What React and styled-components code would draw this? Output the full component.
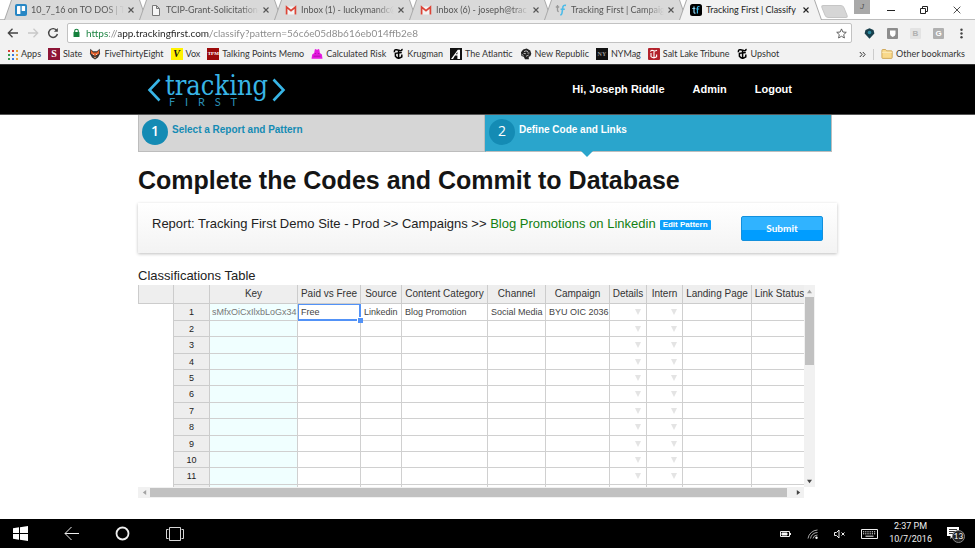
import React from "react";
import styled, { createGlobalStyle, css } from "styled-components";

const UI = `Lato, "Open Sans", sans-serif`;
const SANS = `"Liberation Sans", Arial, sans-serif`;

const Global = createGlobalStyle`
  * { box-sizing: border-box; }
  body { margin: 0; background: #fff; font-family: ${SANS}; color: #222; }
  button { font: inherit; color: inherit; background: none; border: 0; padding: 0; cursor: pointer; }
  a { color: inherit; text-decoration: none; }
  svg { display: block; flex: none; }
`;

const Screen = styled.div`
  min-height: 100vh;
  display: flex;
  flex-direction: column;
  overflow: hidden;
`;

/* ---------- Browser frame ---------- */

const TabStrip = styled.div`
  display: flex;
  height: 20px;
  padding-left: 4px;
  background: #fff;
  border-bottom: 1px solid #bdbdbd;
  font: 9px/20px ${UI};
  color: #555;
`;

const TabBox = styled.div`
  position: relative;
  display: flex;
  align-items: center;
  flex: 0 1 143px;
  min-width: 0;
  height: 20px;
  margin-right: -8px;
  padding: 0 13px 0 11px;
  isolation: isolate;
  color: ${(p) => (p.$active ? "#222" : "#555")};
  z-index: ${(p) => (p.$active ? 1 : 0)};
  &::before,
  &::after {
    content: "";
    position: absolute;
    inset: 0;
    z-index: -2;
    background: #a9a9a9;
    clip-path: polygon(0 100%, 7px 0, calc(100% - 7px) 0, 100% 100%);
  }
  &::after {
    inset: 0 1px;
    z-index: -1;
    background: ${(p) => (p.$active ? "#f2f2f2" : "#d9d9d9")};
  }
`;

const TabTitle = styled.button`
  flex: 1;
  min-width: 0;
  margin: 0 4px;
  height: 20px;
  text-align: left;
  white-space: nowrap;
  overflow: hidden;
  mask-image: ${(p) => (p.$fade ? "linear-gradient(90deg, #000 80%, transparent)" : "none")};
`;

const IconButton = styled.button`
  display: flex;
  align-items: center;
  justify-content: center;
  flex: none;
`;

const NewTab = styled.button`
  width: 23px;
  height: 13px;
  margin: 5px 0 0 9px;
  background: #d6d6d6;
  border: 1px solid #c6c6c6;
  border-radius: 3px;
  transform: skewX(22deg);
`;

const WindowControls = styled.div`
  display: flex;
  align-items: center;
  padding: 0 14px 0 17px;
  gap: 25px;
  color: #222;
`;

const Profile = styled.button`
  width: 16px;
  height: 14px;
  margin-left: auto;
  background: #a9a9a9;
  color: #555;
  font: italic 8px/14px ${SANS};
`;

const Toolbar = styled.div`
  display: flex;
  align-items: center;
  height: 26px;
  padding: 0 8px 0 7px;
  gap: 8px;
  background: #f2f2f2;
`;

const AddressBar = styled.label`
  display: flex;
  align-items: center;
  flex: 1;
  height: 20px;
  padding: 0 4px;
  gap: 5px;
  background: #fff;
  border: 1px solid #c2c2c2;
  border-radius: 2px;
`;

const AddressInput = styled.input`
  flex: 1;
  min-width: 0;
  height: 18px;
  padding: 0;
  border: 0;
  outline: 0;
  font: 10px/18px ${UI};
  color: transparent;
  background: linear-gradient(90deg, #15803c 22px, #888 22px, #888 32px, #222 32px, #222 124px, #888 124px);
  background-clip: text;
`;

const Extensions = styled.div`
  display: flex;
  align-items: center;
  gap: 12px;
  padding-left: 4px;
`;

const ExtBadge = styled.button`
  width: 11px;
  height: 11px;
  border-radius: 1px;
  background: ${(p) => p.$bg};
  color: ${(p) => p.$fg};
  font: bold 8px/11px ${SANS};
  text-align: center;
`;

const Bookmarks = styled.nav`
  display: flex;
  align-items: center;
  height: 18px;
  padding: 0 10px 2px 7px;
  gap: 7px;
  background: #f2f2f2;
  font: 9px/14px ${UI};
  color: #333;
  white-space: nowrap;
`;

const Bookmark = styled.a`
  display: flex;
  align-items: center;
  gap: 3px;
  height: 14px;
`;

const BookmarkEnd = styled.div`
  display: flex;
  align-items: center;
  gap: 7px;
  margin-left: auto;
`;

const Divider = styled.span`
  width: 1px;
  height: 11px;
  background: #ccc;
`;

const Tile = styled.span`
  width: 12px;
  height: 12px;
  background: ${(p) => p.$bg};
  color: ${(p) => p.$fg || "#fff"};
  font: bold ${(p) => p.$size || 10}px/12px "Liberation Serif", serif;
  text-align: center;
`;

/* ---------- Site ---------- */

const SiteHeader = styled.header`
  background: #000;
  border-top: 1px solid #333;
  border-bottom: 1px solid #555;
`;

const Container = styled.div`
  width: 100%;
  max-width: 699px;
  margin: 0 auto;
`;

const HeaderRow = styled(Container)`
  display: flex;
  align-items: center;
  justify-content: space-between;
  height: 49px;
  padding: 0 45px 0 9px;
`;

const Logo = styled.a`
  display: flex;
  align-items: center;
  gap: 4px;
  color: #38b5e6;
`;

const LogoWords = styled.span`
  display: flex;
  flex-direction: column;
`;

const LogoName = styled.span`
  font: 27px/28px "DejaVu Serif Condensed", "DejaVu Serif", serif;
`;

const LogoSub = styled.span`
  display: flex;
  justify-content: space-between;
  width: 68px;
  margin: -3px 0 0 4px;
  font: 11px/10px Lato, sans-serif;
  color: #2b8fb5;
`;

const SiteNav = styled.nav`
  display: flex;
  gap: 28px;
  padding-bottom: 2px;
  font: bold 11px/14px ${SANS};
  color: #fff;
`;

const Steps = styled.ol`
  display: flex;
  list-style: none;
  margin: 0 5px 0 0;
  padding: 0;
`;

const Step = styled.li`
  position: relative;
  flex: 1;
  display: flex;
  gap: 4px;
  height: 37px;
  padding: 4px 3px;
  border: 1px solid #bdbdbd;
  border-top: 0;
  background: #d6d6d6;
  color: #148bb4;
  font: bold 10px/22px ${SANS};
  ${(p) =>
    p.$current &&
    css`
      background: #2aa5cc;
      color: #fff;
      border-left-color: #2aa5cc;
      &::after {
        content: "";
        position: absolute;
        left: 95px;
        top: 36px;
        border: 6px solid transparent;
        border-top-color: #2aa5cc;
        border-bottom: 0;
      }
    `}
`;

const StepNumber = styled.span`
  width: 26px;
  height: 26px;
  border-radius: 50%;
  background: #148bb4;
  color: #fff;
  font: ${(p) => (p.$current ? 400 : 600)} 14px/24px "Open Sans", sans-serif;
  text-align: center;
`;

const Title = styled.h1`
  margin: 14px 0 9px;
  font: bold 25px/28px ${SANS};
  color: #151515;
`;

const ReportCard = styled.section`
  display: flex;
  justify-content: space-between;
  align-items: flex-start;
  height: 50px;
  padding: 13px 14px 0;
  background: linear-gradient(#fff, #f3f3f3);
  box-shadow: 0 1px 3px rgba(0, 0, 0, 0.25);
`;

const ReportText = styled.p`
  display: flex;
  align-items: center;
  gap: 4px;
  margin: 0;
  font: 13px/16px ${SANS};
  white-space: pre;
`;

const PatternName = styled.span`
  color: #128012;
`;

const EditPattern = styled.button`
  height: 10px;
  margin-top: 2px;
  padding: 0 3px;
  border-radius: 1px;
  background: #0d9ffb;
  color: #fff;
  font: bold 8px/10px ${SANS};
`;

const Submit = styled.button`
  width: 82px;
  height: 25px;
  padding-bottom: 2px;
  border: 1px solid #1290dd;
  border-radius: 2px;
  background: linear-gradient(#30b3ff 55%, #009dff 55%);
  color: #fff;
  font: bold 10px/20px ${UI};
`;

const Caption = styled.h2`
  margin: 13px 0 0;
  font: 13px/19px ${SANS};
  color: #222;
`;

const Grid = styled.div`
  display: grid;
  grid-template-columns: minmax(0, 1fr) 11px;
  grid-template-rows: 202px 11px;
  margin: 0 22px 19px 0;
`;

const Viewport = styled.div`
  overflow: hidden;
`;

const Table = styled.table`
  border-collapse: separate;
  border-spacing: 0;
  table-layout: fixed;
  width: 670px;
  font: 9px/12px ${SANS};
  color: #444;
  white-space: nowrap;
`;

const HeadCell = styled.th`
  height: 19px;
  padding: 0;
  background: #eee;
  border: solid #ccc;
  border-width: 0 1px 1px 0;
  font: 10px/18px ${SANS};
  color: #333;
  &:first-child {
    border-left-width: 1px;
  }
`;

const Row = styled.tr`
  height: 16px;
  &:nth-child(5n + 1),
  &:nth-child(5n + 3) {
    height: 17px;
  }
`;

const Spacer = styled.td`
  padding: 0;
  border-right: 1px solid #ccc;
`;

const RowHead = styled.th`
  padding: 0;
  background: #eee;
  border: solid #ccc;
  border-width: 0 1px 1px 0;
  font-weight: 400;
  color: #222;
`;

const Cell = styled.td`
  position: relative;
  padding: 0 3px;
  border: solid #d0d0d0;
  border-width: 0 1px 1px 0;
  background: ${(p) => (p.$key ? "#f0ffff" : "#fff")};
  ${(p) => p.$key && "color: #777; padding: 0 2px;"}
  ${(p) =>
    p.$selected &&
    css`
      z-index: 1;
      border-color: #5292f7;
      box-shadow: 0 0 0 1px #5292f7 inset;
      &::after {
        content: "";
        position: absolute;
        right: -3px;
        bottom: -3px;
        width: 5px;
        height: 5px;
        background: #5292f7;
        border: solid #fff;
        border-width: 1px 0 0 1px;
      }
    `}
`;

const Caret = styled.button`
  display: block;
  margin: 0 2px 0 auto;
  color: #e4e4e4;
`;

const VScroll = styled.div`
  display: flex;
  flex-direction: column;
  align-items: center;
  justify-content: space-between;
  background: #f1f1f1;
`;

const VThumb = styled.div`
  width: 9px;
  height: 68px;
  margin-bottom: auto;
  background: #c1c1c1;
`;

const HScroll = styled.div`
  display: flex;
  align-items: center;
  background: #f1f1f1;
`;

const HThumb = styled.div`
  flex: 1;
  height: 9px;
  margin-right: 5px;
  background: #c1c1c1;
`;

const Arrow = styled(IconButton)`
  width: 12px;
  height: 12px;
  color: ${(p) => (p.$dim ? "#a3a3a3" : "#444")};
`;

/* ---------- Taskbar ---------- */

const Taskbar = styled.footer`
  display: flex;
  align-items: center;
  justify-content: space-between;
  height: 29px;
  margin-top: auto;
  padding: 0 11px 0 13px;
  background: #000;
  color: #eee;
`;

const TaskGroup = styled.div`
  display: flex;
  align-items: center;
  gap: ${(p) => p.$gap}px;
`;

const Clock = styled.time`
  margin: 0 0 1px -4px;
  font: 9px/13px Roboto, sans-serif;
  text-align: center;
`;

const Notice = styled(IconButton)`
  position: relative;
`;

const Count = styled.span`
  position: absolute;
  left: 5px;
  top: 3px;
  width: 13px;
  height: 13px;
  border: 1px solid #888;
  border-radius: 50%;
  background: #222;
  color: #fff;
  font: 8px/11px ${UI};
  text-align: center;
`;

/* ---------- Icons ---------- */

const Svg = ({ w = 12, h = w, vb, children, ...rest }) => (
  <svg width={w} height={h} viewBox={vb || `0 0 ${w} ${h}`} fill="none" stroke="currentColor" aria-hidden="true" {...rest}>
    {children}
  </svg>
);

const Cross = ({ size = 6 }) => (
  <Svg w={size} vb="0 0 6 6" strokeWidth={size > 6 ? 0.6 : 1.1}>
    <path d="M.5.5l5 5M5.5.5l-5 5" />
  </Svg>
);
const Trello = () => (
  <Svg stroke="none">
    <rect width="12" height="12" rx="2" fill="#2686c4" />
    <rect x="2" y="2" width="3.4" height="8" rx=".6" fill="#fff" />
    <rect x="6.7" y="2" width="3.4" height="5" rx=".6" fill="#fff" />
  </Svg>
);
const Doc = () => (
  <Svg strokeWidth="1" color="#777">
    <path d="M2.5 1.5h4l3 3v7h-7zM6.5 1.5v3h3" fill="#f5f5f5" />
  </Svg>
);
const Gmail = () => (
  <Svg stroke="none">
    <path d="M1 2.5h10v8H1z" fill="#f3f3f3" />
    <path d="M1.6 10.5V3L6 6.6 10.4 3v7.5" stroke="#dc4437" strokeWidth="1.7" />
  </Svg>
);
const TfLight = () => (
  <Svg strokeWidth="1.3">
    <path d="M2.5 1v5.5q0 1 1.3 1M.8 3h3.4" stroke="#999" />
    <path d="M11 1.4q-3-.6-3.2 2L7 9q-.3 2-1.8 1.7M5.6 5.2h4.2" stroke="#4cbbe8" strokeWidth="1.6" />
  </Svg>
);
const TfDark = () => (
  <Svg strokeWidth="1.2">
    <rect width="12" height="12" rx="2.5" fill="#000" stroke="none" />
    <path d="M4 2.5v5.6q0 1.2 1.5 1M2.3 4.5h3" stroke="#8fd8f5" />
    <path d="M9.5 2.6Q7.4 2.2 7.4 4v5.6M6.2 5h3" stroke="#38b5e6" />
  </Svg>
);
const AppsIcon = () => (
  <Svg w={11} stroke="none">
    {["#d93d32", "#d93d32", "#e8a33a", "#3a9b50", "#3b78e0", "#e8a33a", "#3a9b50", "#3b78e0", "#e8a33a"].map((c, i) => (
      <rect key={i} x={1 + (i % 3) * 4} y={1 + Math.floor(i / 3) * 4} width="2" height="2" fill={c} />
    ))}
  </Svg>
);
const Fox = () => (
  <Svg stroke="none">
    <path d="M1.3.8l2.8 2.4h3.8L10.7.8l.4 5L9 9.5 6 11.6 3 9.5.9 5.8z" fill="#333" />
    <path d="M2 2l2.2 2.4h3.6L10 2l.2 3.6L6 8 1.8 5.6z" fill="#e8622c" />
    <path d="M3.3 5.4l1.8.8-.7.8zM8.7 5.4l-1.8.8.7.8z" fill="#fff" />
    <path d="M4.4 8.4L6 9l1.6-.6L6 10.6z" fill="#f0a070" />
  </Svg>
);
const Risk = () => (
  <Svg stroke="none">
    <path d="M.5 10.8l.7-4.3 2-1.5.6-3.6 1.1-.5 1.1 1.2L7.2.9l1.1.5.6 3.6 2 1.5.6 4.3z" fill="#e619e0" />
    <path d="M3.8 5.6h1.3M6.9 5.6h1.3M2.5 8.2h7" stroke="#a010a0" strokeWidth=".8" />
  </Svg>
);
const Times = () => (
  <Svg w={11} h={12} color="#000" strokeWidth="1.5">
    <path d="M1.5 4.2Q.8 1.3 3.6 1.8l3.2.8Q9.3 3 9 .8" />
    <path d="M8.8 4.5L2.4 5.3V8.3q2.8 3.4 6.4.6V6.6" />
    <path d="M5.6 3v8" />
  </Svg>
);
const Atlantic = () => (
  <Svg stroke="none">
    <rect width="12" height="12" fill="#111" />
    <path d="M1 11l6.8-9.2H10V11H7.4V7.6H5L3 11zM5.8 6.3h1.6V4z" fill="#fff" />
  </Svg>
);
const Republic = () => (
  <Svg stroke="none">
    <path d="M1 4.2L3.2 1.4 6.7.6l3.6 1.8 1 3.4-1 2.4-1.6.6.2 2.5H5L3.8 8.8 1.4 8z" fill="#222" />
    <path d="M4 3.7q2-1.8 4 0M3.6 5.4l2.3.3M7.4 5h2M6 8.3l2.6-1.2M2 6.6l1.5.8" stroke="#ddd" strokeWidth=".8" />
  </Svg>
);
const Tribune = () => (
  <Svg stroke="none">
    <rect width="12" height="12" rx="1" fill="#b3222c" />
    <path d="M2.5 3.6Q3 1.8 5 2.6t4-.3M3 5v3.6q2.6 2.2 5.6.1V6.4M6 3.4v7" stroke="#fff" strokeWidth="1.1" />
  </Svg>
);
const Folder = () => (
  <Svg strokeWidth=".8" stroke="#c79a45">
    <path d="M.9 2.4q0-.9.9-.9h2.8l1 1.3h4.8q.8 0 .8.8v6q0 .8-.8.8H1.7q-.8 0-.8-.8z" fill="#f9d98b" />
    <path d="M1 4.3h10" stroke="#fdf0c8" />
  </Svg>
);
const Triangle = ({ dir = "down", size = 5 }) => {
  const d = { down: "M0 1h6L3 5z", up: "M0 5h6L3 1z", left: "M5 0v6L1 3z", right: "M1 0v6l4-3z", tall: "M0 0h6L3 6z" }[dir];
  return (
    <Svg w={size} vb="0 0 6 6" stroke="none" fill="currentColor">
      <path d={d} />
    </Svg>
  );
};

/* ---------- Data ---------- */

const tabs = [
  { icon: <Trello />, title: "10_7_16 on TO DOS | Tre" },
  { icon: <Doc />, title: "TCIP-Grant-Solicitation-" },
  { icon: <Gmail />, title: "Inbox (1) - luckymandc@" },
  { icon: <Gmail />, title: "Inbox (6) - joseph@trac" },
  { icon: <TfLight />, title: "Tracking First | Campaig" },
  { icon: <TfDark />, title: "Tracking First | Classify", active: true },
];

const bookmarks = [
  [<AppsIcon />, "Apps"],
  [<Tile $bg="#8d1436">S</Tile>, "Slate"],
  [<Fox />, "FiveThirtyEight"],
  [<Tile $bg="#fff200" $fg="#111"><i>V</i></Tile>, "Vox"],
  [<Tile $bg="#9c0a0a" $size={5}>TPM</Tile>, "Talking Points Memo"],
  [<Risk />, "Calculated Risk"],
  [<Times />, "Krugman"],
  [<Atlantic />, "The Atlantic"],
  [<Republic />, "New Republic"],
  [<Tile $bg="#111" $fg="#999" $size={6}>NY</Tile>, "NYMag"],
  [<Tribune />, "Salt Lake Tribune"],
  [<Times />, "Upshot"],
];

const columns = [
  ["Key", 88],
  ["Paid vs Free", 63],
  ["Source", 41],
  ["Content Category", 86],
  ["Channel", 58],
  ["Campaign", 64],
  ["Details", 37],
  ["Intern", 36],
  ["Landing Page", 69],
  ["Link Status", 56],
];

const firstRow = ["sMfxOiCxIlxbLoGx34", "Free", "Linkedin", "Blog Promotion", "Social Media", "BYU OIC 2036"];
const rowNumbers = Array.from({ length: 12 }, (_, i) => i + 1);

function Browser() {
  return (
    <>
      <TabStrip>
        {tabs.map((t) => (
          <TabBox key={t.title} $active={t.active}>
            {t.icon}
            <TabTitle $fade={!t.active}>{t.title}</TabTitle>
            <IconButton aria-label="Close tab"><Cross /></IconButton>
          </TabBox>
        ))}
        <NewTab aria-label="New tab" />
        <Profile>J</Profile>
        <WindowControls>
          <IconButton aria-label="Minimize"><Svg w={8}><path d="M0 4.5h8" /></Svg></IconButton>
          <IconButton aria-label="Restore"><Svg w={8}><path d="M.5 2.5h5v5h-5zM2.5 2.5v-2h5v5h-2" /></Svg></IconButton>
          <IconButton aria-label="Close window"><Cross size={8} /></IconButton>
        </WindowControls>
      </TabStrip>
      <Toolbar>
        <IconButton aria-label="Back"><Svg strokeWidth="1.3" color="#444"><path d="M11 6H1.5M5.5 1.7L1.3 6l4.2 4.3" /></Svg></IconButton>
        <IconButton aria-label="Forward"><Svg strokeWidth="1.3" color="#c8c8c8"><path d="M1 6h9.5M6.5 1.7L10.7 6l-4.2 4.3" /></Svg></IconButton>
        <IconButton aria-label="Reload">
          <Svg strokeWidth="1.4" color="#444"><path d="M9.8 3.6A4.4 4.4 0 1 0 10.4 7" /><path d="M10.8.9v3.9H6.9z" fill="#444" stroke="none" /></Svg>
        </IconButton>
        <AddressBar>
          <Svg w={9} h={10} stroke="none">
            <rect x="1.5" y="4" width="6" height="5" rx=".5" fill="#15803c" />
            <path d="M2.7 4.5V3a1.8 1.8 0 0 1 3.6 0v1.5" stroke="#15803c" strokeWidth="1.1" />
          </Svg>
          <AddressInput aria-label="Address" defaultValue="https://app.trackingfirst.com/classify?pattern=56c6e05d8b616eb014ffb2e8" />
          <IconButton aria-label="Bookmark this page">
            <Svg w={11} vb="0 0 12 12" color="#555" strokeWidth="1"><path d="M6 1l1.5 3.4 3.7.3-2.8 2.5.8 3.7L6 9l-3.2 1.9.8-3.7L.8 4.7l3.7-.3z" /></Svg>
          </IconButton>
        </AddressBar>
        <Extensions>
          <IconButton aria-label="Location extension">
            <Svg w={11} stroke="none"><path d="M5.5.3l4 1.8.9 3.4-2.6 2.7-2.3 2.6-2.3-2.6L.6 5.5l.9-3.4z" fill="#183f4c" /><circle cx="5.5" cy="4.5" r="1.8" fill="#2c8ba0" /></Svg>
          </IconButton>
          <IconButton aria-label="Shield extension">
            <Svg w={11} stroke="none"><rect width="11" height="11" rx="1" fill="#8d8d8d" /><path d="M3 2.5h5.5V6q0 1.8-2.8 3Q3 7.8 3 6z" fill="#fff" /></Svg>
          </IconButton>
          <ExtBadge $bg="#e3e3e3" $fg="#b0b0b0">B</ExtBadge>
          <ExtBadge $bg="#b0b0b0" $fg="#fff">G</ExtBadge>
          <IconButton aria-label="Menu">
            <Svg w={11} stroke="none" fill="#444"><circle cx="5.5" cy="1.7" r="1.2" /><circle cx="5.5" cy="5.5" r="1.2" /><circle cx="5.5" cy="9.3" r="1.2" /></Svg>
          </IconButton>
        </Extensions>
      </Toolbar>
      <Bookmarks aria-label="Bookmarks">
        {bookmarks.map(([icon, name]) => (
          <Bookmark key={name} href="#">{icon}<span>{name}</span></Bookmark>
        ))}
        <BookmarkEnd>
          <IconButton aria-label="More bookmarks">
            <Svg w={7}><path d="M.8 1l2.3 2.5L.8 6M3.8 1l2.3 2.5L3.8 6" /></Svg>
          </IconButton>
          <Divider />
          <Bookmark href="#"><Folder /><span>Other bookmarks</span></Bookmark>
        </BookmarkEnd>
      </Bookmarks>
    </>
  );
}

function ClassificationGrid() {
  return (
    <Grid>
      <Viewport>
        <Table aria-labelledby="grid-caption">
          <colgroup>
            <col width="36" />
            <col width="36" />
            {columns.map(([name, width]) => <col key={name} width={width} />)}
          </colgroup>
          <thead>
            <tr>
              <HeadCell />
              <HeadCell />
              {columns.map(([name]) => <HeadCell key={name} scope="col">{name}</HeadCell>)}
            </tr>
          </thead>
          <tbody>
            {rowNumbers.map((n) => (
              <Row key={n}>
                <Spacer />
                <RowHead scope="row">{n}</RowHead>
                {columns.map(([name], c) => (
                  <Cell key={name} $key={c === 0} $selected={n === 1 && c === 1}>
                    {n === 1 && firstRow[c]}
                    {(c === 6 || c === 7) && (
                      <Caret aria-label={`Choose ${name} for row ${n}`}><Triangle dir="tall" size={6} /></Caret>
                    )}
                  </Cell>
                ))}
              </Row>
            ))}
          </tbody>
        </Table>
      </Viewport>
      <VScroll>
        <Arrow $dim aria-label="Scroll up"><Triangle dir="up" /></Arrow>
        <VThumb />
        <Arrow aria-label="Scroll down"><Triangle /></Arrow>
      </VScroll>
      <HScroll>
        <Arrow $dim aria-label="Scroll left"><Triangle dir="left" /></Arrow>
        <HThumb />
        <Arrow aria-label="Scroll right"><Triangle dir="right" /></Arrow>
      </HScroll>
    </Grid>
  );
}

function SystemBar() {
  return (
    <Taskbar>
      <TaskGroup $gap={36}>
        <IconButton aria-label="Start">
          <Svg w={15} stroke="none" fill="#fff"><path d="M0 2.2l6-.9v5.8H0zM7 1.2L15 0v7.1H7zM0 7.9h6v5.8l-6-.9zM7 7.9h8V15l-8-1.2z" /></Svg>
        </IconButton>
        <IconButton aria-label="Back"><Svg w={15}><path d="M15 7.5H1M7.5 1L1 7.5 7.5 14" /></Svg></IconButton>
        <IconButton aria-label="Search"><Svg w={15}><circle cx="7.5" cy="7.5" r="6" strokeWidth="1.8" /></Svg></IconButton>
        <IconButton aria-label="Task view">
          <Svg w={18} h={14}><path d="M3.5.5h11v13h-11zM2.5 2.5h-2v9h2M15.5 2.5h2v9h-2" strokeWidth=".9" /></Svg>
        </IconButton>
      </TaskGroup>
      <TaskGroup $gap={15}>
        <IconButton aria-label="Battery">
          <Svg w={13} h={12}><path d="M1.5 3.5h9v5h-9zM11.5 5v2" /><path d="M3 5h5v2H3z" fill="#fff" /></Svg>
        </IconButton>
        <IconButton aria-label="Wi-Fi">
          <Svg w={12} strokeWidth=".9"><path d="M1 10.5A10 10 0 0 1 10.5 2M3.5 10.5a7 7 0 0 1 7-6M6 10.5A4.5 4.5 0 0 1 10.5 7" color="#bbb" /><circle cx="9.5" cy="9.8" r="1.2" fill="#fff" stroke="none" /></Svg>
        </IconButton>
        <IconButton aria-label="Muted">
          <Svg w={12}><path d="M.5 4.5h2l2.5-2.5v8L2.5 7.5h-2zM7.5 4.5l3 3M10.5 4.5l-3 3" /></Svg>
        </IconButton>
        <IconButton aria-label="Keyboard">
          <Svg w={17} h={10}><path d="M.5.5h16v9H.5z" /><path d="M2 2.8h13M2 4.8h13" strokeDasharray="1.2 1" /><path d="M4.5 7.2h8" /></Svg>
        </IconButton>
        <Clock>2:37 PM<br />10/7/2016</Clock>
        <Notice aria-label="13 notifications">
          <Svg w={17} h={14} stroke="none"><path d="M0 0h12v9H6l-2.5 3V9H0z" fill="#fff" /><path d="M2 2.5h8M2 4.5h8M2 6.5h5" stroke="#000" strokeWidth=".8" /></Svg>
          <Count>13</Count>
        </Notice>
      </TaskGroup>
    </Taskbar>
  );
}

export default function App() {
  return (
    <Screen>
      <Global />
      <Browser />
      <SiteHeader>
        <HeaderRow>
          <Logo href="#" aria-label="Tracking First">
            <Svg w={14} h={26} strokeWidth="2.6"><path d="M12.5 2.5L2.5 13l10 10.5" /></Svg>
            <LogoWords>
              <LogoName>tracking</LogoName>
              <LogoSub>{"FIRST".split("").map((ch) => <span key={ch}>{ch}</span>)}</LogoSub>
            </LogoWords>
            <Svg w={14} h={26} strokeWidth="2.6"><path d="M1.5 2.5l10 10.5-10 10.5" /></Svg>
          </Logo>
          <SiteNav>
            <a href="#">Hi, Joseph Riddle</a>
            <a href="#">Admin</a>
            <a href="#">Logout</a>
          </SiteNav>
        </HeaderRow>
      </SiteHeader>
      <Container as="main">
        <Steps>
          <Step><StepNumber>1</StepNumber>Select a Report and Pattern</Step>
          <Step $current aria-current="step"><StepNumber $current>2</StepNumber>Define Code and Links</Step>
        </Steps>
        <Title>Complete the Codes and Commit to Database</Title>
        <ReportCard>
          <ReportText>
            <span>Report: Tracking First Demo Site - Prod &gt;&gt; Campaigns &gt;&gt; <PatternName>Blog Promotions on Linkedin</PatternName></span>
            <EditPattern>Edit Pattern</EditPattern>
          </ReportText>
          <Submit>Submit</Submit>
        </ReportCard>
        <Caption id="grid-caption">Classifications Table</Caption>
        <ClassificationGrid />
      </Container>
      <SystemBar />
    </Screen>
  );
}
